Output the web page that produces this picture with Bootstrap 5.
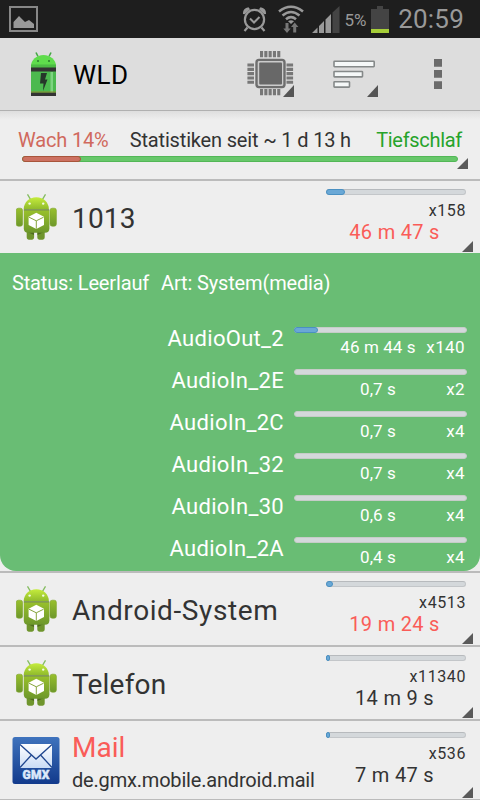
<!DOCTYPE html>
<html lang="de">
  <head>
    <meta charset="UTF-8" />
    <meta name="viewport" content="width=device-width, initial-scale=1.0" />
    <title>WLD</title>
    <link
      href="https://cdn.jsdelivr.net/npm/bootstrap@5.3.0/dist/css/bootstrap.min.css"
      rel="stylesheet"
    />
    <script src="https://cdn.jsdelivr.net/npm/bootstrap@5.3.0/dist/js/bootstrap.bundle.min.js"></script>
    <style>
      body {
        width: 480px;
        height: 800px;
        overflow: hidden;
        background: #eee;
        color: #333;
        font-family: Roboto, "Noto Sans", sans-serif;
      }
      svg {
        display: block;
        flex: none;
      }
      .statusbar {
        height: 38px;
        background: #1e1e1e;
        color: #999;
        padding: 0 16px 0 9px;
      }
      .status-wifi {
        margin: 0 8px 0 11px;
      }
      .status-pct {
        font-size: 17px;
        line-height: 38px;
        margin: 2px 5px 0 4px;
        letter-spacing: -0.1px;
      }
      .status-clock {
        font-size: 26px;
        line-height: 38px;
        margin-left: 9px;
        letter-spacing: 0.2px;
      }
      .appbar {
        height: 73px;
        background: #ddd;
        border-bottom: 1px solid #b0b0b0;
        padding: 0 38px 0 30px;
      }
      .app-title {
        font-size: 26px;
        line-height: 72px;
        margin-left: 16px;
        padding-top: 1px;
        letter-spacing: 0.5px;
        color: #000;
      }
      .icon-sort {
        margin: 0 56px 0 39px;
      }
      .summary {
        height: 70px;
        padding: 17px 18px 0;
        font-size: 20px;
        line-height: 24px;
        letter-spacing: -0.17px;
        border-bottom: 2px solid #bbb;
        background: linear-gradient(#dedede, #eee 9px);
      }
      .summary .meter {
        margin: 4px 4px 0;
        background: #67c76a;
        border-color: #52b756;
      }
      .summary .meter-fill {
        background: #cd7161;
        border-color: #a8553b;
      }
      .summary .corner {
        right: 12px;
        bottom: 10px;
      }
      .summary-since {
        margin-right: 4px;
      }
      .c-wach {
        color: #d0695d;
      }
      .c-tief {
        color: #26a32a;
        letter-spacing: -0.3px;
      }
      .c-alarm {
        color: #fa5c58;
      }
      .meter {
        height: 6px;
        border: 1px solid #c3c6c9;
        border-top-color: #b7babd;
        border-radius: 3px;
        background: #d4d8db;
      }
      .meter-fill {
        height: 6px;
        margin: -1px 0 0 -1px;
        border: 1px solid #4a90c2;
        border-radius: 3px;
        background: #6aa8d6;
      }
      .entry {
        height: 74px;
        padding: 0 14px 0 12px;
        border-bottom: 2px solid #bbb;
      }
      .entry-open {
        height: 72px;
        border-bottom: 0;
      }
      .entry-tall {
        height: 79px;
        border-bottom: 1px solid #bbb;
      }
      .entry-tall .entry-side {
        padding-top: 11px;
      }
      .entry-icon {
        width: 48px;
      }
      .entry-name {
        font-size: 28px;
        line-height: 34px;
        margin-left: 12px;
        padding-top: 4px;
        letter-spacing: 0.2px;
      }
      .entry-name-wide {
        letter-spacing: 0.6px;
      }
      .entry-tall .entry-name {
        padding-top: 3px;
        letter-spacing: 0;
      }
      .entry-pkg {
        font-size: 20px;
        line-height: 24px;
        margin-left: 12px;
        padding-top: 3px;
        letter-spacing: -0.19px;
      }
      .entry-side {
        width: 140px;
        padding-top: 8px;
      }
      .entry-count {
        font-size: 16px;
        line-height: 18px;
        margin-top: 7px;
        letter-spacing: 0.6px;
      }
      .entry-time {
        font-size: 20px;
        line-height: 24px;
        padding-right: 3px;
        letter-spacing: 0.3px;
      }
      .corner {
        position: absolute;
        right: 7px;
        bottom: 1px;
        width: 11px;
        height: 11px;
        background: #5a5a5a;
        clip-path: polygon(100% 0, 100% 100%, 0 100%);
      }
      .detail-wrap {
        border-bottom: 2px solid #bbb;
      }
      .detail {
        height: 318px;
        padding: 18px 13px 0 12px;
        background: #69bd74;
        color: #fff;
        border-radius: 0 0 16px 16px;
      }
      .detail-info {
        font-size: 20px;
        line-height: 24px;
        margin-bottom: 32px;
        letter-spacing: -0.15px;
      }
      .lock {
        height: 42px;
      }
      .lock-name {
        width: 272px;
        font-size: 22px;
        line-height: 24px;
        letter-spacing: 0.3px;
      }
      .lock-side {
        width: 173px;
      }
      .lock-side .meter {
        border-color: #c6ccc8;
      }
      .lock-time,
      .lock-count {
        font-size: 17px;
        line-height: 20px;
      }
      .lock-time {
        width: 96px;
        margin-left: 36px;
        letter-spacing: 0.1px;
      }
      .lock-count {
        margin-right: 2px;
        letter-spacing: 0.4px;
      }
    </style>
  </head>
  <body>
    <!-- shared symbols -->
    <svg width="0" height="0" class="position-absolute">
      <defs>
        <linearGradient id="droidFill" x1="0" y1="0" x2="0" y2="1">
          <stop offset="0" stop-color="#98c02c" />
          <stop offset="1" stop-color="#6d972b" />
        </linearGradient>
        <linearGradient id="headFill" x1="0" y1="0" x2="0" y2="1">
          <stop offset="0" stop-color="#c5ec3c" />
          <stop offset="1" stop-color="#8fba2c" />
        </linearGradient>
        <linearGradient id="gmxFill" x1="0" y1="0" x2="0" y2="1">
          <stop offset="0" stop-color="#3f73bd" />
          <stop offset="1" stop-color="#123a8c" />
        </linearGradient>
        <linearGradient id="envFill" x1="0" y1="0" x2="0" y2="1">
          <stop offset="0" stop-color="#fff" />
          <stop offset="1" stop-color="#c9dcf5" />
        </linearGradient>
        <symbol id="droid" viewBox="0 0 41 46">
          <path d="M11.5 0.3l3 5M29.5 0.3l-3 5" stroke="#86bd62" stroke-width="1.3" />
          <path d="M10.7 36h7.4v7.2q0 2.6-3.7 2.6t-3.7-2.6zM21.3 36h7.4v7.2q0 2.6-3.7 2.6t-3.7-2.6z" fill="#6f952d" />
          <path d="M11.5 38h6.5v3zM21.5 38h6.5l-6.5 3z" fill="#4f6a20" />
          <rect x="0.2" y="14.2" width="6.4" height="18" rx="2.2" fill="url(#droidFill)" stroke="#7da52c" stroke-width="0.6" />
          <rect x="34" y="14.2" width="6.4" height="18" rx="2.2" fill="url(#droidFill)" stroke="#7da52c" stroke-width="0.6" />
          <path d="M7.8 16.3h25.6v18q0 4.5-4.5 4.5H12.3q-4.5 0-4.5-4.5z" fill="url(#droidFill)" />
          <path d="M7.7 15.3c0-6.500 5.200-12 12.600-12s12.600 5.500 12.600 12z" fill="url(#headFill)" />
          <path d="M7.8 15.9h25.400" stroke="#56761f" stroke-width="1.1" />
          <circle cx="13.6" cy="9.6" r="1.2" fill="#f2fbe6" />
          <circle cx="27.2" cy="9.6" r="1.2" fill="#f2fbe6" />
          <path d="M20.3 18.8l7.700 4v8.200l-7.700 4-7.700-4v-8.200z" fill="#fff" />
          <path d="M13 23.2l7.300 3.600 7.300-3.600M20.300 26.800v8" fill="none" stroke="#86a43c" stroke-width="1" />
        </symbol>
      </defs>
    </svg>

    <div class="statusbar d-flex align-items-center">
      <svg width="29" height="26" viewBox="0 0 29 26">
        <rect x="1" y="1" width="27" height="24" fill="none" stroke="#888" stroke-width="2" />
        <path d="M4.500 22v-6l5.500-6 6 6 4-2 5 4v4z" fill="#999" />
      </svg>
      <svg class="ms-auto" width="25" height="26" viewBox="0 0 25 26" fill="none" stroke="#999">
        <circle cx="12.5" cy="13.5" r="9.6" stroke-width="2.2" />
        <path d="M8 12.500l4 4 5.500-5.500" stroke-width="2" />
        <path d="M1 8Q0.500 2.500 6.500 1.200L8 3.200 2.800 8.200zM24 8Q24.500 2.500 18.500 1.200L17 3.200l5.200 5z" fill="#999" stroke="none" />
        <path d="M5.500 21.500L2.500 25M19.500 21.500l3 3.500" stroke-width="2.2" />
      </svg>
      <svg class="status-wifi" width="26" height="28" viewBox="0 0 26 28">
        <g fill="none" stroke="#999" stroke-width="2.6">
          <path d="M1 6.500q12-9.500 24 0M4.500 10.500q8.500-7 17 0M8 14.200q5-4.200 10 0" />
        </g>
        <path d="M13 19l-3-2.800q3-2 6 0z" fill="#999" />
        <path d="M7.500 18h3v5.500h2.200L9 28l-3.700-4.500h2.200zM15.200 27.500v-5.500H13l3.700-4.500 3.700 4.500h-2.200v5.500z" fill="#777" />
      </svg>
      <svg width="28" height="27" viewBox="0 0 28 27">
        <path d="M0 27L5.500 21.500V27zM7 27v-7L12 15v12zM13.500 27V13.500L19 8v19z" fill="#999" />
        <path d="M20.500 27V6.500L27.500 0v27z" fill="#444" />
      </svg>
      <div class="status-pct">5%</div>
      <svg width="18" height="27" viewBox="0 0 18 27">
        <path d="M6 0h6v3h6v20H0V3h6z" fill="#444" />
        <path d="M0 23h18v4H0z" fill="#a6ce39" />
      </svg>
      <div class="status-clock">20:59</div>
    </div>

    <nav class="appbar d-flex align-items-center">
      <svg width="27" height="46" viewBox="0 -1 27 46">
        <path d="M6 0.500l2 4M21 0.500l-2 4" stroke="#43a843" stroke-width="1.6" />
        <path d="M1 15.500v-1.500C1 8 6.500 3 13.500 3S26 8 26 14v1.500z" fill="#5fdc4c" />
        <path d="M1 12.500h25v3.500H1z" fill="#4dbb45" />
        <circle cx="8" cy="9" r="1" fill="#2a7a2c" />
        <circle cx="19" cy="9" r="1" fill="#2a7a2c" />
        <path d="M1 16h25v28H1z" fill="#4cb94f" />
        <path d="M20.500 20h2.500v21h-2.500z" fill="#7ed481" />
        <path d="M1 15.500h25v4H1zM1 40.500h25V44H1z" fill="#333" />
        <path d="M1 39.500h25v1H1z" fill="#8a8a30" />
        <path d="M11 21h6l-2 6.500h2.500l-4.500 11.500 0.500-7.500h-3.500z" fill="#26362a" />
      </svg>
      <div class="app-title">WLD</div>
      <svg class="ms-auto" width="47" height="46" viewBox="247 51 47 46">
        <g stroke="#777" stroke-width="3" stroke-dasharray="3.1 1.2">
          <path d="M260 54.200h20.300M260 92.200h20.300" stroke-width="6.2" />
          <path d="M250.700 63.500v20.300M289.800 63.500v20.300" stroke-width="6.6" />
        </g>
        <rect x="256.5" y="59.9" width="28" height="27.2" rx="2.5" fill="#ccc" stroke="#6e6e6e" stroke-width="2.4" />
        <rect x="259.2" y="62.4" width="22.8" height="22.2" rx="1" fill="#686868" />
        <path d="M294 85v12h-11z" fill="#555" />
      </svg>
      <svg class="icon-sort" width="45" height="46" viewBox="333 51 45 46">
        <g fill="#f5f8f8" stroke="#858989" stroke-width="1.6">
          <rect x="334" y="61.3" width="40.2" height="5.4" rx="0.6" />
          <rect x="334" y="71.5" width="28.5" height="5.4" rx="0.6" />
          <rect x="334" y="81.7" width="15.5" height="5.4" rx="0.6" />
        </g>
        <path d="M378 85v12h-11z" fill="#555" />
      </svg>
      <svg width="8" height="30" viewBox="0 0 8 30" fill="#6b6b6b">
        <path d="M0 0h8v7.700H0zM0 11h8v7.700H0zM0 22.300h8V30H0z" />
      </svg>
    </nav>

    <div class="summary position-relative">
      <div class="d-flex justify-content-between">
        <span class="c-wach">Wach 14%</span>
        <span class="summary-since">Statistiken seit ~ 1 d 13 h</span>
        <span class="c-tief">Tiefschlaf</span>
      </div>
      <div class="meter"><div class="meter-fill" style="width: 59px"></div></div>
      <span class="corner"></span>
    </div>

    <div class="entry entry-open position-relative d-flex">
      <div class="entry-icon align-self-center ps-1"><svg width="41" height="46"><use href="#droid" /></svg></div>
      <div class="entry-name align-self-center">1013</div>
      <div class="entry-side ms-auto">
        <div class="meter"><div class="meter-fill" style="width: 19px"></div></div>
        <div class="entry-count text-end">x158</div>
        <div class="entry-time text-center c-alarm">46 m 47 s</div>
      </div>
      <span class="corner"></span>
    </div>

    <div class="detail-wrap">
      <div class="detail">
        <div class="detail-info d-flex gap-2">
          <span>Status: Leerlauf</span>
          <span class="ms-1">Art: System(media)</span>
        </div>
        <div id="locks"></div>
      </div>
    </div>

    <div class="entry position-relative d-flex">
      <div class="entry-icon align-self-center ps-1"><svg width="41" height="46"><use href="#droid" /></svg></div>
      <div class="entry-name entry-name-wide align-self-center">Android-System</div>
      <div class="entry-side ms-auto">
        <div class="meter"><div class="meter-fill" style="width: 7px"></div></div>
        <div class="entry-count text-end">x4513</div>
        <div class="entry-time text-center c-alarm">19 m 24 s</div>
      </div>
      <span class="corner"></span>
    </div>

    <div class="entry position-relative d-flex">
      <div class="entry-icon align-self-center ps-1"><svg width="41" height="46"><use href="#droid" /></svg></div>
      <div class="entry-name align-self-center">Telefon</div>
      <div class="entry-side ms-auto">
        <div class="meter"><div class="meter-fill" style="width: 4px"></div></div>
        <div class="entry-count text-end">x11340</div>
        <div class="entry-time text-center">14 m 9 s</div>
      </div>
      <span class="corner"></span>
    </div>

    <div class="entry entry-tall position-relative d-flex">
      <div class="entry-icon align-self-center">
        <svg width="48" height="47" viewBox="0 0 48 47">
          <rect x="0.5" y="0" width="47" height="47" rx="2.5" fill="url(#gmxFill)" />
          <rect x="8" y="7" width="32" height="24" fill="url(#envFill)" />
          <path d="M8 7.500l16 14.500L40 7.500M8 30.500l11-12M40 30.500l-11-12" fill="none" stroke="#1f468f" stroke-width="1.3" />
          <text x="24" y="41.7" text-anchor="middle" textLength="27" font-family="Roboto" font-weight="900" font-size="12" fill="#dce9fa" stroke="#dce9fa" stroke-width="0.5">GMX</text>
        </svg>
      </div>
      <div class="align-self-center">
        <div class="entry-name c-alarm">Mail</div>
        <div class="entry-pkg">de.gmx.mobile.android.mail</div>
      </div>
      <div class="entry-side ms-auto">
        <div class="meter"><div class="meter-fill" style="width: 4px"></div></div>
        <div class="entry-count text-end">x536</div>
        <div class="entry-time text-center">7 m 47 s</div>
      </div>
      <span class="corner"></span>
    </div>

    <script>
      const locks = [
        { name: "AudioOut_2", time: "46 m 44 s", count: 140, bar: 24 },
        { name: "AudioIn_2E", time: "0,7 s", count: 2, bar: 0 },
        { name: "AudioIn_2C", time: "0,7 s", count: 4, bar: 0 },
        { name: "AudioIn_32", time: "0,7 s", count: 4, bar: 0 },
        { name: "AudioIn_30", time: "0,6 s", count: 4, bar: 0 },
        { name: "AudioIn_2A", time: "0,4 s", count: 4, bar: 0 },
      ];
      document.getElementById("locks").innerHTML = locks
        .map(
          (lock) => `<div class="lock d-flex justify-content-between">
            <div class="lock-name text-end">${lock.name}</div>
            <div class="lock-side">
              <div class="meter">${lock.bar ? `<div class="meter-fill" style="width: ${lock.bar}px"></div>` : ""}</div>
              <div class="d-flex pt-1">
                <div class="lock-time text-center text-nowrap">${lock.time}</div>
                <div class="lock-count ms-auto">x${lock.count}</div>
              </div>
            </div>
          </div>`
        )
        .join("");
    </script>
  </body>
</html>
